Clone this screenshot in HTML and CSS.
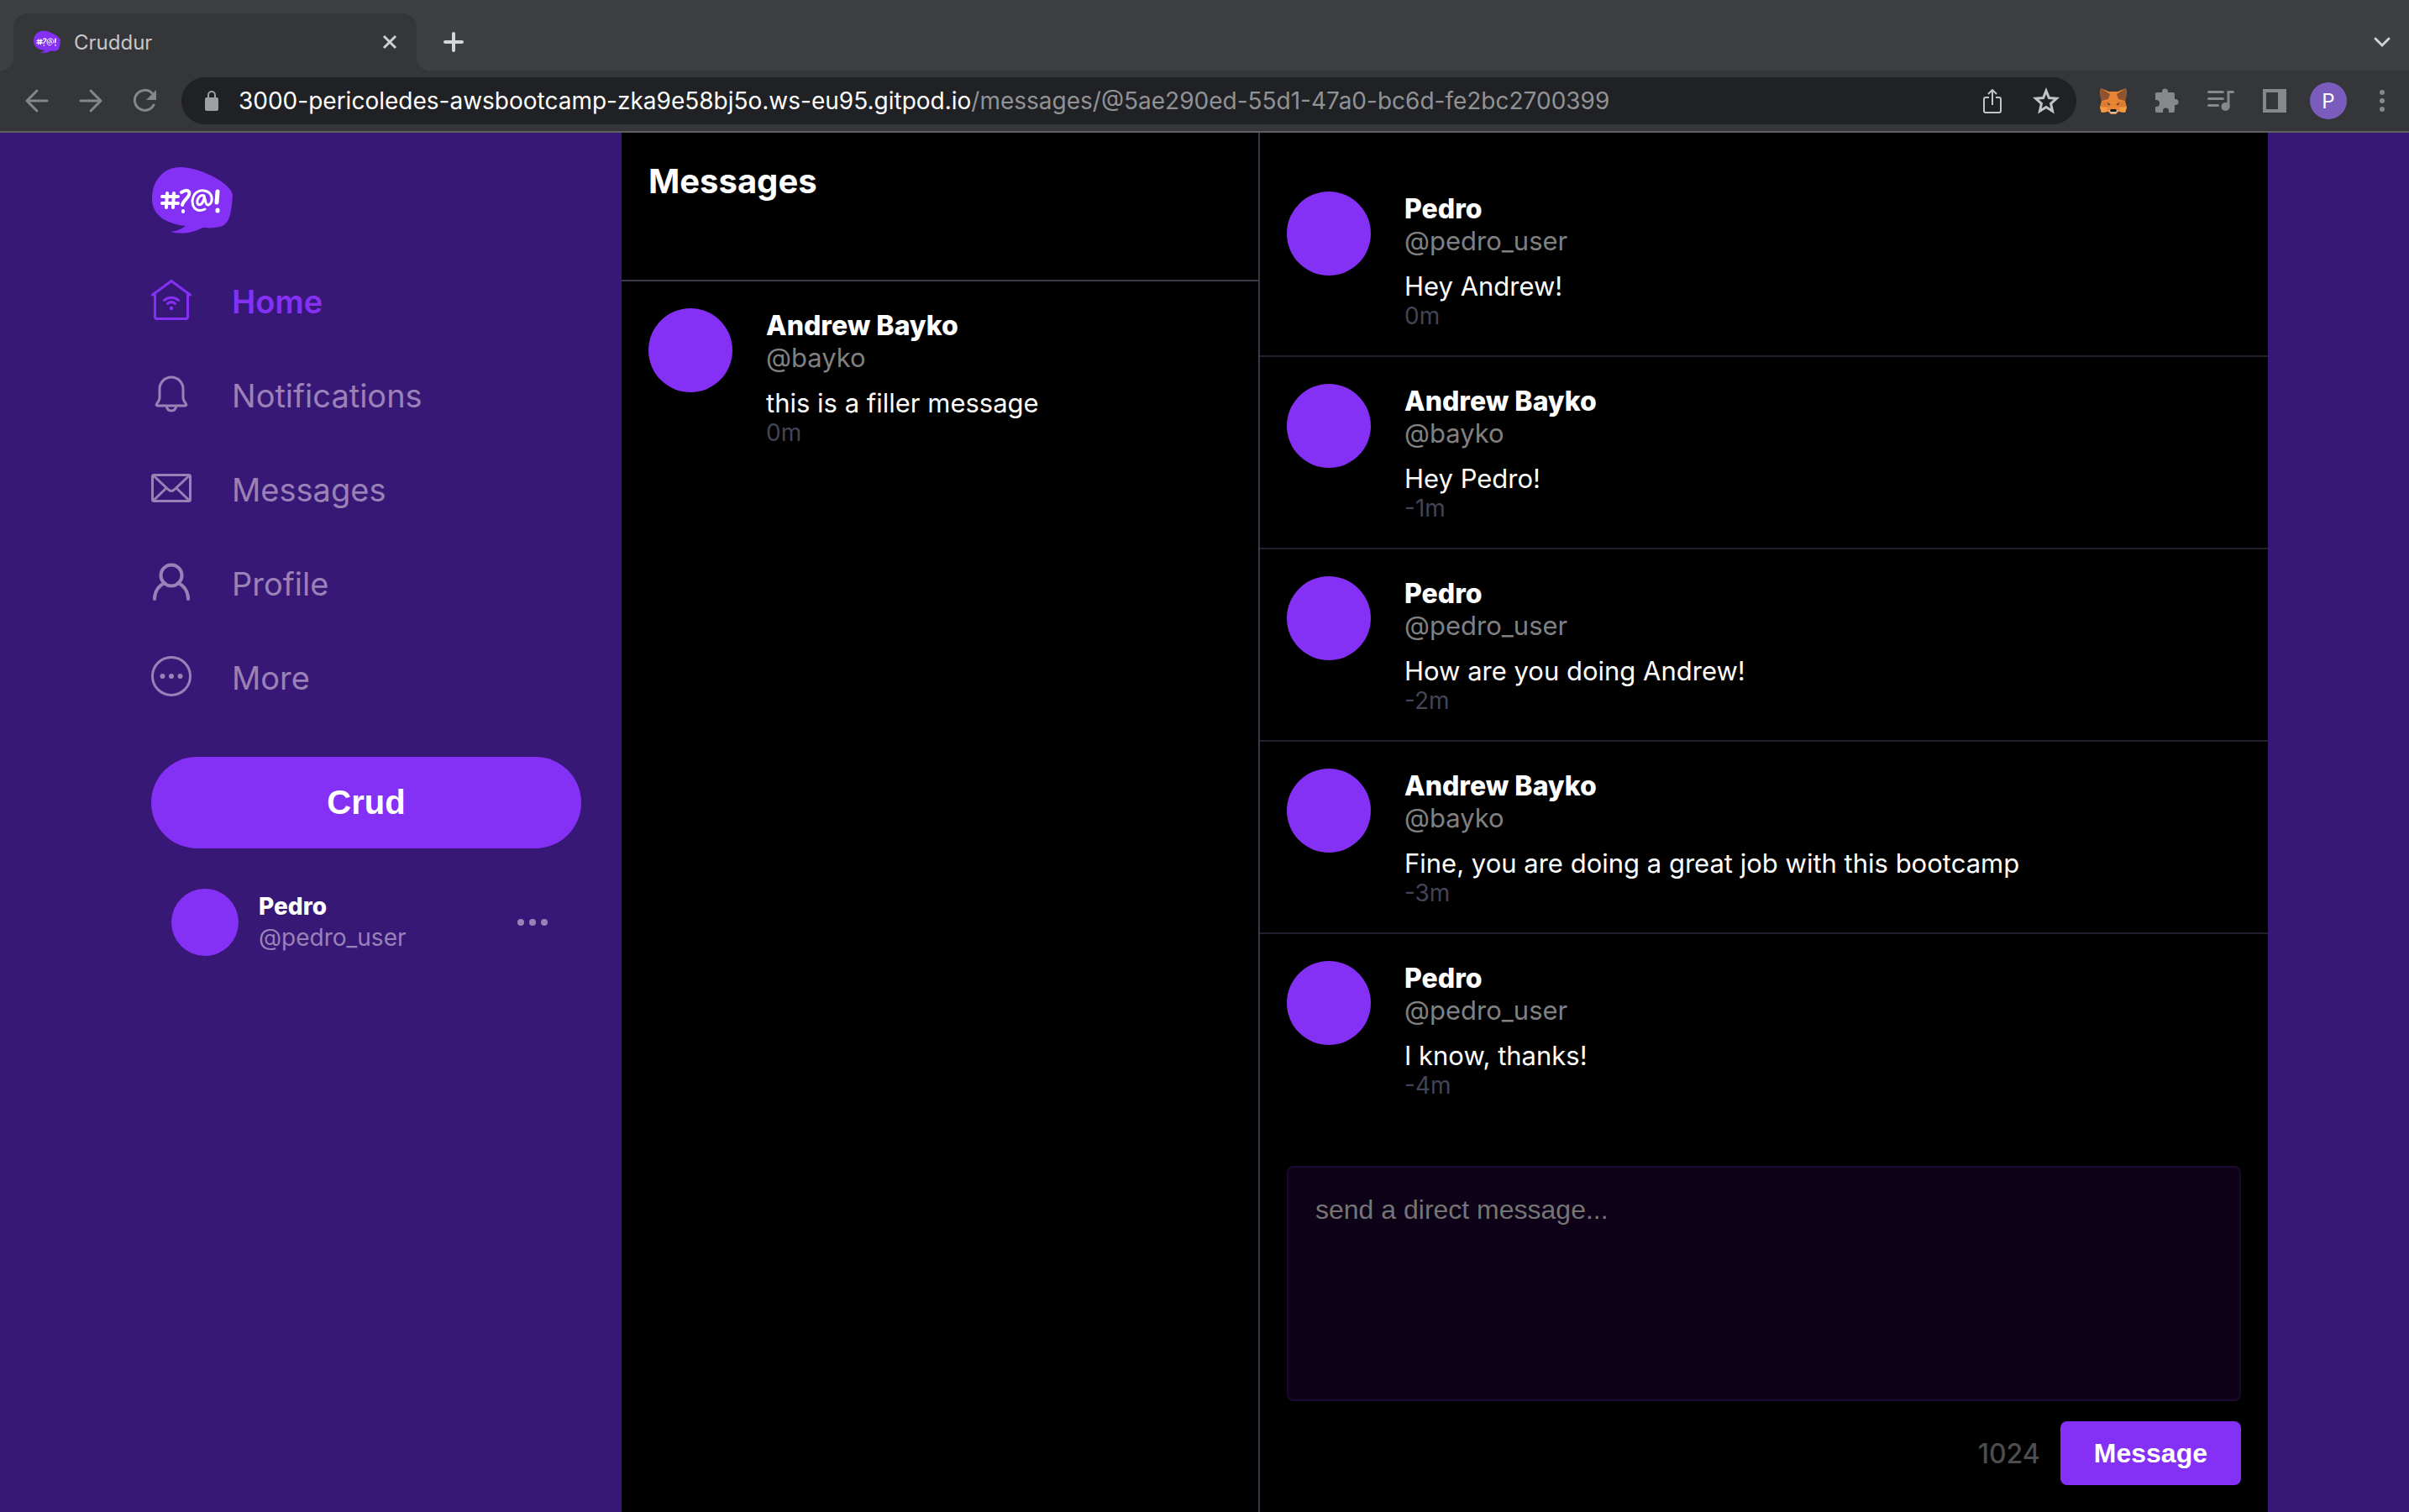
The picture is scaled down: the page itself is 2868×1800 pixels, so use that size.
FILE: index.html
```html
<!DOCTYPE html>
<html lang="en">
<head>
<meta charset="utf-8">
<title>Cruddur</title>
<link rel="stylesheet" href="styles.css">
</head>
<body>
<svg class="defs" width="0" height="0" aria-hidden="true">
  <symbol id="bubble" viewBox="0 0 96 80">
    <path d="M34 0C12 0 0 18 0 37c0 18 13 30 40 33-4 3-10 6-18 7 12 3 26 2 38-5 4 0 8 1 14 0 16-1 20-8 22-39C93 18 56 0 34 0z" fill="#8530f5"/>
    <g fill="none" stroke="#fff" stroke-width="4" stroke-linecap="round">
      <path d="M18 31l-1 17M26 31l-1 17M12 35h19M12 43h19"/>
      <path d="M35 30c6-4 11-2 9 3-1 4-7 7-8 12M37 52v1"/>
      <path stroke-width="3" d="M63 50c-8 4-15 0-15-10 1-9 7-13 14-12 7 1 10 6 9 12-1 5-6 7-7 2l-2-8c-5-2-9 4-8 9 2 4 7 1 8-7"/>
      <path stroke-width="5" d="M78 29l-1 13M78 51v1"/>
    </g>
  </symbol>
</svg>
<header class="browser">
  <div class="tabs">
    <div class="tab">
      <svg class="favicon"><use href="#bubble"/></svg>
      <span class="tab-title">Cruddur</span>
      <button class="icon-button" aria-label="Close tab"><svg width="20" height="20" viewBox="0 0 20 20"><path d="M3 3l14 14M17 3L3 17" stroke="#cfd0d2" stroke-width="3"/></svg></button>
    </div>
    <button class="icon-button new-tab" aria-label="New tab"><svg width="28" height="28" viewBox="0 0 28 28"><path d="M14 4v20M4 14h20" stroke="#d5d6d8" stroke-width="4" stroke-linecap="round"/></svg></button>
    <button class="icon-button tab-search" aria-label="Search tabs"><svg width="24" height="24" viewBox="0 0 24 24"><path d="M4 8l8 8 8-8" fill="none" stroke="#d0d1d3" stroke-width="3" stroke-linecap="round"/></svg></button>
  </div>
  <div class="toolbar">
    <div class="nav-buttons">
      <button class="icon-button" aria-label="Back"><svg width="32" height="32" viewBox="0 0 32 32"><path d="M28 16H4M16 4L4 16l12 12" fill="none" stroke="#858689" stroke-width="3" stroke-linecap="round" stroke-linejoin="round"/></svg></button>
      <button class="icon-button" aria-label="Forward"><svg width="32" height="32" viewBox="0 0 32 32"><path d="M4 16h24M16 4l12 12-12 12" fill="none" stroke="#858689" stroke-width="3" stroke-linecap="round" stroke-linejoin="round"/></svg></button>
      <button class="icon-button" aria-label="Reload"><svg width="32" height="32" viewBox="0 0 32 32"><path d="M25 7a12 12 0 1 0 2 14" fill="none" stroke="#858689" stroke-width="3" stroke-linecap="round"/><path d="M30 3v12H18z" fill="#858689"/></svg></button>
    </div>
    <div class="omnibox">
      <svg width="16" height="24" viewBox="0 0 16 24"><path d="M4 10V5a4 4 0 0 1 8 0v5" fill="none" stroke="#9aa0a4" stroke-width="2"/><rect y="8" width="16" height="16" rx="2" fill="#9aa0a4"/></svg>
      <span class="url"><span class="host">3000-pericoledes-awsbootcamp-zka9e58bj5o.ws-eu95.gitpod.io</span>/messages/@5ae290ed-55d1-47a0-bc6d-fe2bc2700399</span>
      <button class="icon-button" aria-label="Share"><svg width="32" height="32" viewBox="0 0 32 32"><path d="M12 12H8q-2 0-2 2v14q0 2 2 2h16q2 0 2-2V14q0-2-2-2h-4M16 21V3M11 8l5-5 5 5" fill="none" stroke="#c3c4c6" stroke-width="2" stroke-linejoin="round"/></svg></button>
      <button class="icon-button" aria-label="Bookmark"><svg width="32" height="32" viewBox="0 0 32 32"><path d="M16 4l3.400 8.500 9 .8-6.800 6 2 9L16 23.500 8.400 28.300l2-9-6.800-6 9-.8z" fill="none" stroke="#c3c4c6" stroke-width="3"/></svg></button>
    </div>
    <div class="extensions">
      <button class="icon-button" aria-label="Fox wallet"><svg width="32" height="32" viewBox="0 0 32 32"><path d="M1 1l10 4h10l10-4 1 6-2 9 2 8-2 6-8-1-3 3h-6l-3-3-8 1-2-6 2-8-2-9z" fill="#e88434"/><path d="M1 1l11 7-2 6-8 2-2-8zM31 1L20 8l2 6 8 2 2-8z" fill="#8e5432"/><path d="M0 23l9 1-1 5-6 1zM32 23l-9 1 1 5 6 1z" fill="#f19a43"/><path d="M3 17l9 0 0 6-11 0zM29 17l-9 0 0 6 11 0z" fill="#dc7a32"/><path d="M9 18l4 3-3 0zM23 18l-4 3 3 0z" fill="#473b35"/><path d="M10 27h12l-3 4h-6z" fill="#d5bfb0"/><path d="M13 26h6l1 2-1 1h-6l-1-1z" fill="#161616"/></svg></button>
      <button class="icon-button" aria-label="Extensions"><svg width="32" height="32" viewBox="0 0 32 32"><path d="M4 6h6V5a3.500 3.500 0 0 1 7 0v1h6q2 0 2 2v6h1a3.500 3.500 0 0 1 0 7h-1v7q0 2-2 2h-5v-2a3.500 3.500 0 0 0-7 0v2H4q-2 0-2-2v-5h1a4 4 0 0 0 0-8H2V8q0-2 2-2z" fill="#87888b"/></svg></button>
      <button class="icon-button" aria-label="Media"><svg width="32" height="32" viewBox="0 0 32 32"><path d="M1.500 5.500h17M1.500 13.500h17M1.500 21.500h11M25 23V5.500h5.500" fill="none" stroke="#87888b" stroke-width="3" stroke-linecap="round"/><circle cx="21.500" cy="23" r="5" fill="#87888b"/></svg></button>
      <button class="icon-button" aria-label="Side panel"><svg width="32" height="32" viewBox="0 0 32 32"><path d="M2 2h28v28H2zM6 6v20h14V6z" fill="#87888b" fill-rule="evenodd"/></svg></button>
      <button class="avatar-button">P</button>
      <button class="icon-button" aria-label="Menu"><svg width="8" height="28" viewBox="0 0 8 28"><g fill="#87888b"><circle cx="4" cy="4" r="3"/><circle cx="4" cy="14" r="3"/><circle cx="4" cy="24" r="3"/></g></svg></button>
    </div>
  </div>
</header>
<div class="app">
  <aside class="sidebar">
    <svg class="logo"><use href="#bubble"/></svg>
    <nav class="menu">
      <a class="menu-item active" href="#home"><svg viewBox="0 0 48 48"><path d="M1.500 18L24 1.500 46.500 18M4.500 16v28a2.500 2.500 0 0 0 2.500 2.500h34a2.500 2.500 0 0 0 2.500-2.500V16M15.500 24.500c5-4.500 12-4.500 17 0M19.500 28.500c3-2.500 6-2.500 9 0"/><circle class="solid" cx="24" cy="34" r="2.200"/></svg>Home</a>
      <a class="menu-item" href="#notifications"><svg viewBox="0 0 48 48"><path d="M10 18a14 14 0 0 1 28 0v10q0 4 3 7 2 3-1 3H8q-3 0-1-3 3-3 3-7zM18 38q1 6 6 6t6-6"/></svg>Notifications</a>
      <a class="menu-item" href="#messages"><svg viewBox="0 0 48 48"><rect x="1.500" y="8.500" width="45" height="31" rx="2"/><path d="M3 9.500l17 16q4 4 8 0l17-16M3 38.500L17 25M45 38.500L31 25"/></svg>Messages</a>
      <a class="menu-item" href="#profile"><svg viewBox="0 0 48 48"><g stroke-width="4"><circle cx="24" cy="16" r="12.500"/><path d="M4 44c0-9 5-16 12-19M44 44c0-9-5-16-12-19"/></g></svg>Profile</a>
      <a class="menu-item" href="#more"><svg viewBox="0 0 48 48"><circle cx="24" cy="24" r="22.500"/><g class="solid"><circle cx="13.500" cy="24" r="3"/><circle cx="24" cy="24" r="3"/><circle cx="34.500" cy="24" r="3"/></g></svg>More</a>
    </nav>
    <button class="crud">Crud</button>
    <div class="profile">
      <span class="avatar"></span>
      <div class="profile-text"><strong>Pedro</strong><span>@pedro_user</span></div>
      <button class="icon-button" aria-label="Profile options"><svg width="36" height="8" viewBox="0 0 36 8"><g fill="#9a82b8"><circle cx="4" cy="4" r="4"/><circle cx="18" cy="4" r="4"/><circle cx="32" cy="4" r="4"/></g></svg></button>
    </div>
  </aside>
  <section class="groups">
    <h1 class="groups-title">Messages</h1>
    <a class="message" href="#bayko"><span class="avatar"></span><div class="message-text"><strong>Andrew Bayko</strong><span class="handle">@bayko</span><p>this is a filler message</p><time>0m</time></div></a>
  </section>
  <main class="feed">
    <article class="message"><span class="avatar"></span><div class="message-text"><strong>Pedro</strong><span class="handle">@pedro_user</span><p>Hey Andrew!</p><time>0m</time></div></article>
    <article class="message"><span class="avatar"></span><div class="message-text"><strong>Andrew Bayko</strong><span class="handle">@bayko</span><p>Hey Pedro!</p><time>-1m</time></div></article>
    <article class="message"><span class="avatar"></span><div class="message-text"><strong>Pedro</strong><span class="handle">@pedro_user</span><p>How are you doing Andrew!</p><time>-2m</time></div></article>
    <article class="message"><span class="avatar"></span><div class="message-text"><strong>Andrew Bayko</strong><span class="handle">@bayko</span><p>Fine, you are doing a great job with this bootcamp</p><time>-3m</time></div></article>
    <article class="message"><span class="avatar"></span><div class="message-text"><strong>Pedro</strong><span class="handle">@pedro_user</span><p>I know, thanks!</p><time>-4m</time></div></article>
    <form class="composer">
      <textarea aria-label="Direct message" placeholder="send a direct message..."></textarea>
      <div class="composer-actions"><span class="count">1024</span><button class="send" type="button">Message</button></div>
    </form>
  </main>
</div>
</body>
</html>
```

FILE: styles.css
```css
* { box-sizing: border-box; }
body {
  margin: 0;
  min-height: 100vh;
  display: flex;
  flex-direction: column;
  background: #381876;
  color: #fff;
  font-family: Inter, "Liberation Sans", sans-serif;
}
button { font: inherit; color: inherit; border: 0; cursor: pointer; }
a { color: inherit; text-decoration: none; }
svg { display: block; flex: none; }
.defs { position: absolute; }
.icon-button { display: flex; flex: none; padding: 0; background: none; }

/* Browser chrome */
.browser { background: #35363a; border-bottom: 2px solid #5f6064; }
.tabs {
  display: flex;
  align-items: center;
  height: 84px;
  padding: 16px 20px 0 16px;
  background: #3c4043;
}
.tab {
  position: relative;
  display: flex;
  align-items: center;
  width: 480px;
  height: 68px;
  padding: 0 22px 0 24px;
  border-radius: 16px 16px 0 0;
  background: #35363a;
}
.tab::before, .tab::after {
  content: "";
  position: absolute;
  bottom: 0;
  width: 16px;
  height: 16px;
}
.tab::before { right: 100%; background: radial-gradient(circle at 0 0, #3c4043 16px, #35363a 16px); }
.tab::after { left: 100%; background: radial-gradient(circle at 100% 0, #3c4043 16px, #35363a 16px); }
.favicon { width: 32px; height: 28px; margin-right: 16px; }
.tab-title { flex: 1; font-size: 24px; color: #c6c7c9; }
.new-tab { margin-left: 30px; }
.tab-search { margin-left: auto; }
.toolbar { display: flex; align-items: center; height: 72px; padding: 0 28px; }
.nav-buttons { display: flex; gap: 32px; width: 188px; }
.omnibox {
  flex: 1;
  display: flex;
  align-items: center;
  gap: 32px;
  height: 56px;
  padding: 0 20px 0 28px;
  border-radius: 28px;
  background: #202124;
}
.url { flex: 1; margin-left: -8px; font-size: 28px; color: #919295; white-space: nowrap; }
.host { color: #fff; }
.extensions { display: flex; align-items: center; gap: 32px; margin-left: 28px; }
.avatar-button {
  width: 44px;
  height: 44px;
  margin: 0 -6px;
  padding: 0;
  border-radius: 50%;
  background: #7a5cbd;
  font-size: 24px;
}
.extensions .icon-button:last-child { margin-left: 12px; }

/* App layout */
.app {
  flex: 1;
  display: grid;
  grid-template-columns: 572px 760px minmax(0, 1fr);
  padding: 0 168px;
}
.avatar { flex: none; border-radius: 50%; background: #8530f5; }

/* Sidebar */
.sidebar { padding: 41px 48px 0 12px; }
.logo { width: 98px; height: 80px; margin-bottom: 22px; }
.menu-item {
  display: flex;
  align-items: flex-start;
  gap: 48px;
  padding: 32px 0 28px;
  font-size: 38px;
  line-height: 52px;
  color: #9a82b8;
}
.menu-item svg { width: 48px; height: 48px; fill: none; stroke: currentColor; stroke-width: 3; stroke-linecap: round; }
.menu-item .solid { fill: currentColor; stroke: none; }
.active { color: #8530f5; font-weight: 600; }
.crud {
  width: 100%;
  height: 109px;
  margin-top: 40px;
  border-radius: 55px;
  background: #8530f5;
  font: bold 40px "Liberation Sans", Arial, sans-serif;
}
.profile { display: flex; align-items: center; gap: 24px; padding: 48px 40px 0 24px; }
.profile .avatar { width: 80px; height: 80px; }
.profile-text { flex: 1; font-size: 28px; line-height: 37px; color: #9a82b8; }
.profile-text strong, .profile-text span { display: block; }
.profile-text strong { color: #fff; font-weight: 800; }

/* Message groups */
.groups { background: #000; border-right: 2px solid #3a3a4c; }
.groups-title {
  height: 177px;
  margin: 0;
  padding: 34px 32px;
  border-bottom: 2px solid #3a3a4c;
  font-size: 40px;
  line-height: 48px;
  font-weight: 700;
}
.message { display: flex; gap: 40px; padding: 32px 32px 30px; font-size: 31px; line-height: 38px; }
.message .avatar { width: 100px; height: 100px; }
.message-text { padding-top: 2px; }
.message strong, .message .handle, .message time { display: block; }
.message strong { font-size: 32px; font-weight: 800; }
.message .handle { color: #808080; }
.message p { margin: 16px 0 0; }
.message time { color: #424457; font-size: 28px; line-height: 33px; }

/* Message feed */
.feed { background: #000; padding-top: 38px; }
.feed .message + .message { border-top: 2px solid #20202c; }
.composer { padding: 49px 32px 32px; }
.composer textarea {
  display: block;
  width: 100%;
  height: 280px;
  padding: 32px;
  border: 2px solid #1c0830;
  border-radius: 8px;
  background: #0d0217;
  color: #fff;
  font: 32px "Liberation Sans", Arial, sans-serif;
  resize: none;
}
.composer textarea::placeholder { color: #757575; }
.composer-actions { display: flex; justify-content: flex-end; align-items: center; gap: 24px; margin-top: 24px; }
.count { font-size: 32px; color: #4d4d4d; font-weight: 500; }
.send {
  height: 76px;
  padding: 0 40px;
  border-radius: 8px;
  background: #8530f5;
  font: bold 32px "Liberation Sans", Arial, sans-serif;
}
```
